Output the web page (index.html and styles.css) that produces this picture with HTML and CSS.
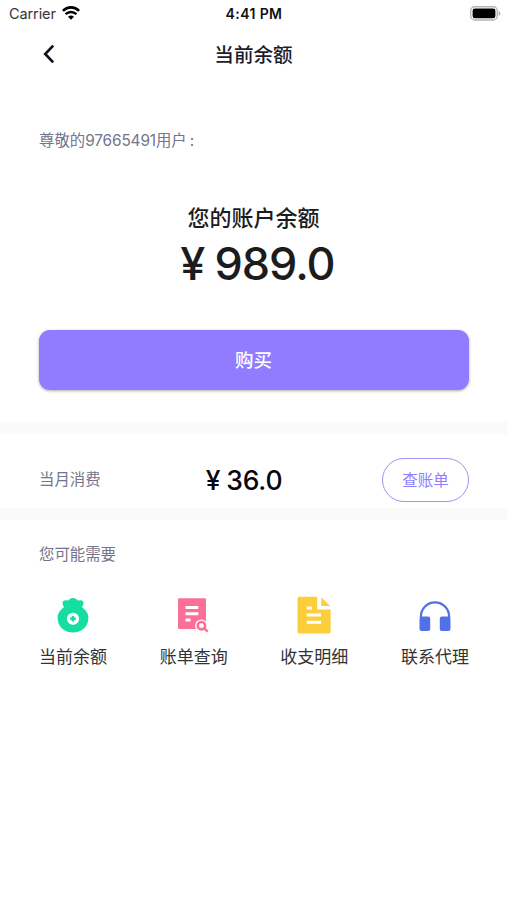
FILE: index.html
```html
<!DOCTYPE html>
<html lang="zh-CN">
<head>
<meta charset="utf-8">
<meta name="viewport" content="width=device-width, initial-scale=1">
<title>当前余额</title>
<link rel="stylesheet" href="styles.css">
</head>
<body>
<div class="status">
  <div class="carrier"><span>Carrier</span>
    <svg width="18" height="14" viewBox="0 0 18 14" fill="none" stroke="#000"><path d="M.9 4.9C5.4.2 12.6.2 17.1 4.9" stroke-width="2.6"/><path d="M3.600 8.100C6.700 5.200 11.300 5.200 14.400 8.100" stroke-width="2.500"/><path d="M9 13.800 6 10.800C7.700 9.100 10.300 9.100 12 10.800Z" fill="#000" stroke="none"/></svg>
  </div>
  <time class="time">4:41 PM</time>
  <svg class="battery" width="31" height="15" viewBox="0 0 31 15"><rect x=".75" y=".75" width="26.5" height="13.3" rx="4" fill="#fff" stroke="#b5b5b5" stroke-width="1.4"/><rect x="2.6" y="2.6" width="22.8" height="9.6" rx="2.2"/><path d="M28.7 5v4.8Q30.3 9 30.3 7.4T28.7 5Z" fill="#aaa"/></svg>
</div>
<header class="nav">
  <svg class="back" width="12" height="20" viewBox="0 0 12 20" fill="none" stroke="#11111b" stroke-width="2.7"><path d="M10.2 1.6 2.2 10l8 8.4"/></svg>
  <h1>当前余额</h1>
</header>
<main>
  <section class="account">
    <p class="muted greeting">尊敬的<span class="account-id">97665491</span>用户<span class="colon">:</span></p>
    <h2>您的账户余额</h2>
    <div class="balance"><span>¥</span><span>989.0</span></div>
    <button class="buy">购买</button>
  </section>
  <section class="month">
    <span class="muted">当月消费</span>
    <div class="spent"><span>¥</span><span>36.0</span></div>
    <button class="bill">查账单</button>
  </section>
  <section class="needs">
    <p class="muted">您可能需要</p>
    <nav class="links">
      <a><svg width="36" height="40" viewBox="0 0 36 40"><path d="M9 13C9 11.500 7.500 10 7.500 8c0-2.600 2.500-3.300 4.800-2.500C13.300 5.700 13.800 5 14.800 4c1.700-1.400 4.600-1.400 6.200 0 1.200 1 1.700 1.800 3 1.500 2.300-.8 4.500-.1 4.500 2.500 0 2-1.500 3.500-1.500 5Z" fill="#16dda0"/><path d="M10 11.500h16c4.700 3.100 7.400 6.900 7.400 11.300C33.400 32 26.400 37.600 18 37.600S2.600 32 2.600 22.800c0-4.400 2.700-8.200 7.400-11.300Z" fill="#16dda0"/><circle cx="18" cy="23.800" r="6.100" fill="#fff"/><path d="M18 21v5.600M15.200 23.800h5.600" stroke="#16dda0" stroke-width="2.600"/></svg><span>当前余额</span></a>
      <a><svg width="36" height="40" viewBox="0 0 36 40"><rect x="2" y="3.200" width="28" height="30.700" rx="1.200" fill="#fb6f99"/><path d="M9.500 12.500h12.800M9.500 18.700h12.800M9.500 24.900h5" stroke="#fff" stroke-width="3"/><circle cx="25.400" cy="30.700" r="6.300" fill="#fff"/><g fill="none" stroke="#fb6f99" stroke-width="2.600"><circle cx="25.400" cy="30.700" r="3.700"/><path d="m28.100 33.400 3.600 3.200"/></g></svg><span>账单查询</span></a>
      <a><svg width="36" height="40" viewBox="0 0 36 40"><path d="M3.200 1.800h18v12.600h13.400v22.400q0 1.600-1.600 1.600H3.200q-1.700 0-1.700-1.600V3.500q0-1.700 1.700-1.700ZM25.200 2.300l9 8.600h-9Z" fill="#fdce3b"/><path d="M10.800 12.900h5.100M10.800 20h14.300M10.800 27.300h14.300" stroke="#fff" stroke-width="3"/></svg><span>收支明细</span></a>
      <a><svg width="36" height="40" viewBox="0 0 36 40"><path d="M3.900 23v-1.500a14.100 14.100 0 0 1 28.200 0V23" fill="none" stroke="#5270e8" stroke-width="2.300"/><path d="M5.500 21.500h5.700q2 0 2 2v10.600q0 2-2 2H4.800q-2.300 0-2.300-2v-9.600q0-3 3-3ZM30.500 21.500h-5.700q-2 0-2 2v10.600q0 2 2 2h6.400q2.300 0 2.300-2v-9.600q0-3-3-3Z" fill="#5270e8"/></svg><span>联系代理</span></a>
    </nav>
  </section>
</main>
</body>
</html>
```
FILE: styles.css
```css
* { box-sizing: border-box; }
body { margin: 0; background: #fff; color: #1c1c1e; font-family: Inter, "Noto Sans CJK SC", sans-serif; }
h1, h2, p { margin: 0; }
svg { display: block; flex: none; }
button { font: inherit; padding: 0; }
.status { height: 27px; display: grid; grid-template-columns: 1fr auto 1fr; align-items: center; padding: 0 6px 0 9px; font-size: 14.5px; line-height: 26px; }
.carrier { display: flex; align-items: center; gap: 6px; letter-spacing: -.1px; color: #333; }
.carrier svg { margin-top: -2px; }
.time { font-weight: 600; font-size: 14px; color: #111; letter-spacing: .4px; padding-right: 2px; }
.battery { justify-self: end; margin-top: -1px; }
.nav { height: 54px; display: grid; grid-template-columns: 1fr auto 1fr; align-items: center; padding: 0 39px; }
.back { margin-left: 4px; }
h1 { font-size: 19.6px; font-weight: 500; line-height: 30px; padding-top: 1px; color: #1c1b2b; }
.muted { font-size: 15.4px; line-height: 22px; color: #74748c; padding-top: 1px; }
.account { height: 341px; padding: 48px 38px 0 39px; display: flex; flex-direction: column; align-items: center; }
.greeting { align-self: flex-start; }
.account-id { letter-spacing: -.15px; }
.colon { margin-left: 3px; }
h2 { margin-top: 49px; margin-right: 1px; font-size: 22px; line-height: 34px; font-weight: 500; }
.balance { display: flex; gap: 10px; font-size: 45px; line-height: 56px; font-weight: 500; letter-spacing: -1px; margin-top: 1px; padding-left: 7px; }
.buy { width: 100%; height: 60px; margin-top: 38px; padding: 0 1px 2px 0; border: 0; border-radius: 11px; background: #917cff; color: #fff; font-size: 18.5px; font-weight: 500; box-shadow: 0 1px 3px #0005; }
.month { height: 98px; border: solid #fafafa; border-width: 12px 0; padding: 17px 38px 0 39px; display: grid; grid-template-columns: 1fr auto 1fr; align-items: center; }
.spent { display: flex; gap: 6px; font-size: 26.5px; font-weight: 500; letter-spacing: -.2px; color: #08080f; margin-left: -20px; }
.bill { justify-self: end; width: 87px; height: 44px; padding-bottom: 2px; border: 1.5px solid #a292f5; border-radius: 22px; background: #fff; color: #917cff; font-size: 15.5px; }
.needs { padding: 23px 38px 0 39px; }
.links { display: flex; justify-content: space-between; margin-top: 29px; }
.links a { display: flex; flex-direction: column; align-items: center; font-size: 17px; line-height: 26px; color: #333; }
.links span { margin-top: 9px; }
```
